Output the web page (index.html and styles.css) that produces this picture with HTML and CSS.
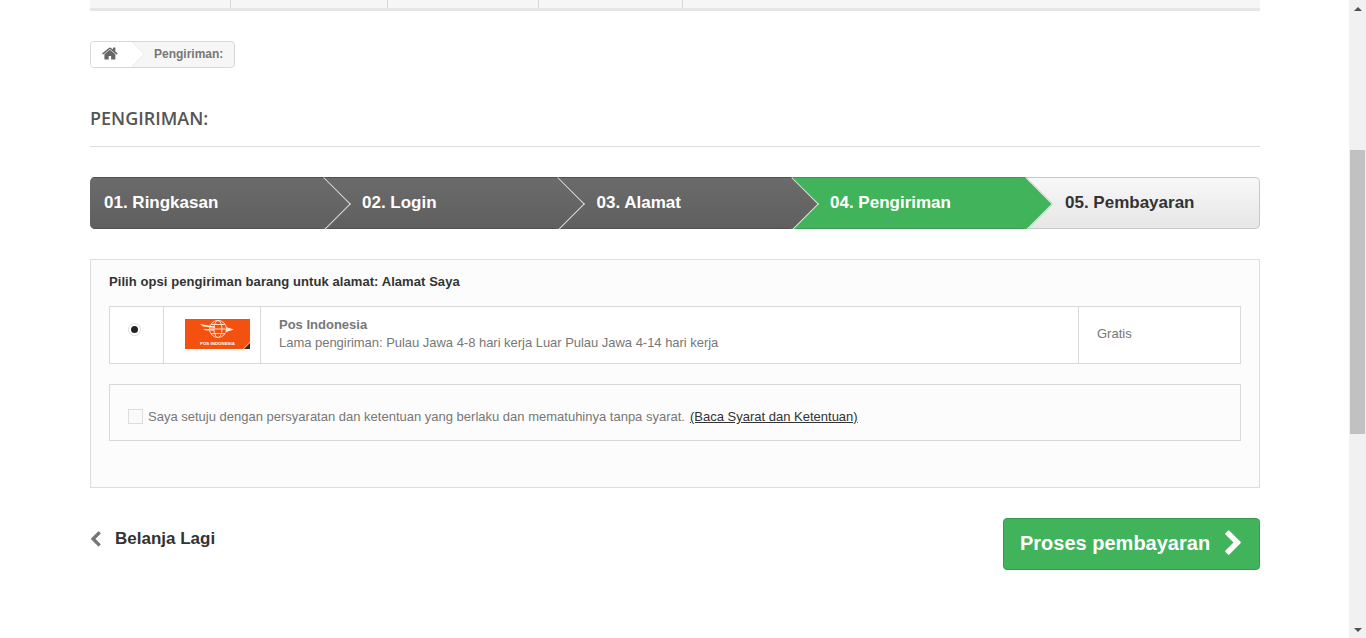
FILE: index.html
```html
<!DOCTYPE html>
<html lang="id">
<head>
<meta charset="utf-8">
<title>Pengiriman</title>
<link rel="stylesheet" href="styles.css">
</head>
<body>
<div class="app">
  <main class="page">
    <div class="topbar">
      <span class="tb tb1"></span><span class="tb tb2"></span><span class="tb tb3"></span><span class="tb tb4"></span>
    </div>
    <nav class="crumb">
      <a class="crumb-home"><svg class="home-icon" viewBox="0 0 1792 1792"><path d="M1408 992v480q0 26-19 45t-45 19h-384v-384h-256v384h-384q-26 0-45-19t-19-45v-480q0-1 .5-3t.5-3l575-474 575 474q1 2 1 6zm223-69l-62 74q-8 9-21 11h-3q-13 0-21-7l-692-577-692 577q-12 8-24 7-13-2-21-11l-62-74q-8-10-7-23.5t11-21.5l719-599q32-26 76-26t76 26l244 204v-195q0-14 9-23t23-9h192q14 0 23 9t9 23v408l219 182q10 8 11 21.5t-7 23.5z"/></svg></a>
      <span class="crumb-text">Pengiriman:</span>
    </nav>
    <h1 class="title">PENGIRIMAN:</h1>
    <ol class="steps">
      <li class="step done"><span>01. Ringkasan</span></li>
      <li class="step done second"><span>02. Login</span></li>
      <li class="step done third"><span>03. Alamat</span></li>
      <li class="step active"><span>04. Pengiriman</span></li>
      <li class="step todo"><span>05. Pembayaran</span></li>
    </ol>
    <section class="panel">
      <p class="panel-title">Pilih opsi pengiriman barang untuk alamat: Alamat Saya</p>
      <div class="option">
        <div class="cell c-radio"><span class="radio"></span></div>
        <div class="cell c-logo">
          <div class="logo">
            <svg class="logo-art" viewBox="0 0 65 30">
              <g fill="none" stroke="#ffd9c4" stroke-width="1">
                <circle cx="33" cy="10" r="8.500"/>
                <ellipse cx="33" cy="10" rx="4" ry="8.500"/>
                <path d="M24.500 10h17M26 5.500h14M26 14.500h14"/>
              </g>
              <path d="M15 5l15 2.500v1.500l-12-1.500zM18 10h11v1.500h-8zM41 8l8 2.500-8 2.500z" fill="#ffe6d8"/>
              <path d="M58 30l7-7v1l-6 6z" fill="#fff"/>
              <path d="M59 30l6-6v6z" fill="#3a2a20"/>
            </svg>
            <span class="logo-text">POS INDONESIA</span>
          </div>
        </div>
        <div class="cell c-desc">
          <strong class="carrier">Pos Indonesia</strong>
          <span class="eta">Lama pengiriman: Pulau Jawa 4-8 hari kerja Luar Pulau Jawa 4-14 hari kerja</span>
        </div>
        <div class="cell c-price">Gratis</div>
      </div>
      <div class="terms">
        <span class="check"></span>
        <span class="terms-text">Saya setuju dengan persyaratan dan ketentuan yang berlaku dan mematuhinya tanpa syarat.</span>
        <a class="terms-link">(Baca Syarat dan Ketentuan)</a>
      </div>
    </section>
    <div class="actions">
      <a class="back"><svg class="back-icon" viewBox="0 0 1792 1792"><path d="M1427 301l-531 531 531 531q19 19 19 45t-19 45l-166 166q-19 19-45 19t-45-19l-742-742q-19-19-19-45t19-45l742-742q19-19 45-19t45 19l166 166q19 19 19 45t-19 45z"/></svg>Belanja Lagi</a>
      <a class="next">Proses pembayaran<svg class="next-icon" viewBox="0 0 1792 1792"><path d="M1363 877l-742 742q-19 19-45 19t-45-19l-166-166q-19-19-19-45t19-45l531-531-531-531q-19-19-19-45t19-45l166-166q19-19 45-19t45 19l742 742q19 19 19 45t-19 45z"/></svg></a>
    </div>
  </main>
  <aside class="scrollbar">
    <span class="arrow up"></span>
    <span class="track"><span class="thumb"></span></span>
    <span class="arrow down"></span>
  </aside>
</div>
</body>
</html>
```
FILE: styles.css
```css
* { box-sizing: border-box; }
html, body { margin: 0; padding: 0; height: 100%; overflow: hidden; background: #fff; }
body { font-family: "Liberation Sans", Arial, sans-serif; font-size: 13px; color: #777; }

.app { display: flex; height: 638px; }
.page { flex: 1; min-width: 0; padding: 0 89px 0 90px; }

/* top strip */
.topbar { display: flex; height: 11px; background: #f6f6f6; border-bottom: 3px solid #e6e6e6; }
.tb { border-right: 1px solid #d8d8d8; height: 8px; }
.tb1 { width: 141px; }
.tb2 { width: 157px; }
.tb3 { width: 151px; }
.tb4 { width: 144px; }

/* breadcrumb */
.crumb { display: flex; align-items: center; width: 145px; height: 27px; margin-top: 30px; border: 1px solid #d8d8d8; border-radius: 4px; background: #f6f6f6; overflow: hidden; }
.crumb-home { position: relative; display: flex; align-items: center; justify-content: center; width: 40px; height: 100%; padding-right: 1px; background: #fff; }
.crumb-home::after { content: ""; position: absolute; right: -9px; top: 3px; width: 18px; height: 18px; transform: rotate(45deg); background: #fff; box-shadow: 1px -1px 0 #eee; }
.home-icon { position: relative; z-index: 1; width: 17px; height: 17px; fill: #666; margin-top: -3px; }
.crumb-text { margin-left: 23px; font-weight: 700; font-size: 12px; color: #777; padding-bottom: 1px; }

/* heading */
.title { margin: 0; height: 79px; padding-top: 39px; border-bottom: 1px solid #ddd; font: 600 18px/22px "Open Sans", sans-serif; color: #555; }

/* steps */
.steps { display: flex; height: 52px; margin: 30px 0 0; padding: 0; list-style: none; border-radius: 5px; overflow: hidden; background: linear-gradient(#f8f8f8, #e6e6e6); box-shadow: inset 0 0 0 1px #c8c8c8; }
.step { position: relative; display: flex; align-items: center; width: 234px; font-size: 17px; font-weight: 700; }
.step::after { content: ""; position: absolute; right: -19px; top: 7.500px; width: 37px; height: 37px; transform: rotate(45deg); z-index: 2; }
.done { background: linear-gradient(#6b6b6b, #5f5f5f); color: #fff; padding-left: 14px; box-shadow: inset 0 1px 0 #505050, inset 0 -1px 0 #505050; }
.done::after { background: linear-gradient(135deg, #6b6b6b, #5f5f5f); border-top: 1px solid #ddd; border-right: 1px solid #ddd; }
.second { padding-left: 38px; }
.third { padding-left: 38.500px; }
.active { background: #41b35a; color: #fff; padding-left: 38px; box-shadow: inset 0 1px 0 #37994d, inset 0 -1px 0 #37994d; }
.active::after { background: #41b35a; border-top: 1px solid #e4e4e4; border-right: 1px solid #e4e4e4; }
.todo { flex: 1; color: #333; padding-left: 39px; }
.todo::after { display: none; }
.step span { position: relative; z-index: 3; }

/* panel */
.panel { height: 229px; margin-top: 30px; padding: 14px 18px 0; border: 1px solid #ddd; background: #fcfcfc; }
.panel-title { margin: 0; height: 32px; font-weight: 700; line-height: 15px; color: #333; letter-spacing: .07px; }
.option { display: flex; height: 58px; border: 1px solid #d9d9d9; background: #fff; }
.cell { border-right: 1px solid #d9d9d9; }
.c-radio { display: flex; justify-content: center; width: 54px; padding: 16px 4px 0 0; }
.radio { display: flex; align-items: center; justify-content: center; width: 13px; height: 13px; border: 1px solid #ddd; border-radius: 50%; background: #fff; }
.radio::before { content: ""; width: 7px; height: 7px; border-radius: 50%; background: #222; }
.c-logo { width: 97px; padding: 12px 0 0 21px; }
.logo { position: relative; width: 65px; height: 30px; background: #f4500f; }
.logo-art { display: block; width: 65px; height: 30px; }
.logo-text { position: absolute; left: 15px; bottom: 3px; font-size: 4.400px; line-height: 4px; font-weight: 700; color: #fff; white-space: nowrap; }
.c-desc { flex: 1; display: flex; flex-direction: column; padding: 9px 0 0 18px; line-height: 18px; }
.carrier { font-weight: 700; color: #777; }
.eta { color: #777; letter-spacing: -.03px; }
.c-price { width: 161px; border-right: 0; padding: 18px 0 0 18px; line-height: 18px; }
.terms { display: flex; align-items: center; height: 57px; margin-top: 20px; padding: 8px 0 0 18px; border: 1px solid #d9d9d9; }
.check { width: 15px; height: 15px; margin-right: 5px; border: 1px solid #ddd; background: #fafafa; }
.terms-link { margin-left: 5px; color: #333; text-decoration: underline; }

/* actions */
.actions { display: flex; justify-content: space-between; align-items: flex-start; margin-top: 30px; }
.back { display: flex; align-items: center; height: 42px; font-size: 17px; font-weight: 700; color: #333; }
.back-icon { width: 17px; height: 17px; margin: 0 11px 0 -3px; fill: #777; }
.next { display: flex; align-items: center; width: 257px; height: 52px; padding: 0 0 2px 16px; border: 1px solid #37994d; border-radius: 4px; background: #41b35a; color: #fff; font-size: 20px; font-weight: 700; }
.next-icon { width: 27px; height: 27px; margin-left: 10px; fill: #fff; }

/* scrollbar */
.scrollbar { display: flex; flex-direction: column; flex: none; width: 17px; height: 638px; background: #f1f1f1; }
.track { flex: 1; padding-top: 133px; }
.thumb { display: block; width: 15px; height: 284px; margin-left: 1px; background: #c1c1c1; }
.arrow { display: flex; flex: none; justify-content: center; align-items: center; height: 17px; }
.arrow::before { content: ""; border-left: 4px solid transparent; border-right: 4px solid transparent; }
.up::before { border-bottom: 4px solid #505050; }
.down::before { border-top: 4px solid #505050; }
```
